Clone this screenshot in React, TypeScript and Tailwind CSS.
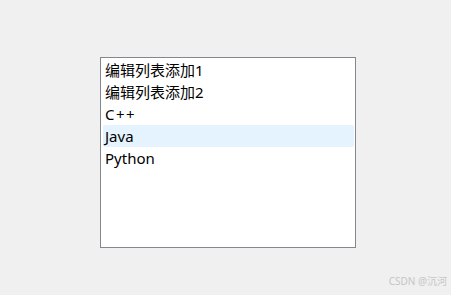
const items = ["编辑列表添加1", "编辑列表添加2", "C++", "Java", "Python"];

export default function App() {
  const selected = 3;
  return (
    <div className="relative w-[451px] h-[295px] bg-[#f0f0f0] pt-[57px] pl-[100px] font-['Noto_Sans','Noto_Sans_CJK_SC',sans-serif]">
      <div className="w-[256px] h-[191px] border border-[#828790] bg-white p-px">
        {items.map((item, i) => (
          <div
            key={item}
            className={`h-[22px] ml-px pl-[2px] text-[15px] leading-[22px] text-black rounded-[2px] ${
              i === selected ? "bg-[#e5f3ff]" : ""
            }`}
          >
            {item === "C++" ? <span className="tracking-[1.5px]">C++</span> : item}
          </div>
        ))}
      </div>
      {/* watermark */}
      <div className="absolute right-[4px] bottom-[6px] text-[10px] text-[#c6c6c6]">CSDN @沉河</div>
    </div>
  );
}
